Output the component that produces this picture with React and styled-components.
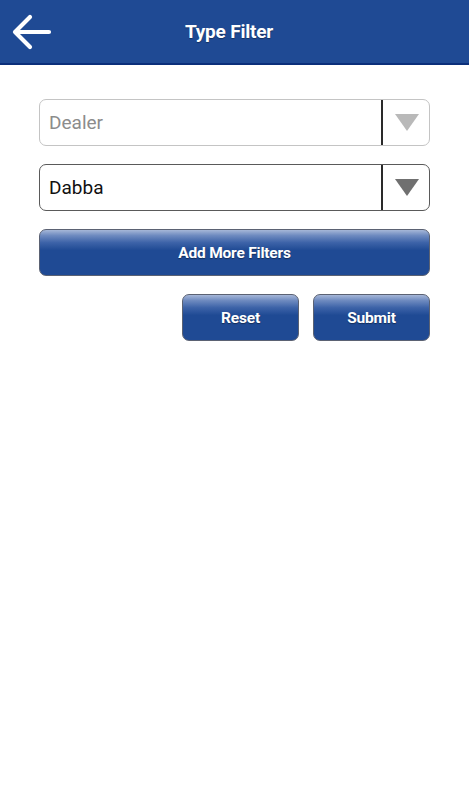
import React from "react";
import styled, { createGlobalStyle } from "styled-components";

const GlobalStyle = createGlobalStyle`
    html, body {
        margin: 0;
        padding: 0;
        background: #ffffff;
        font-family: Roboto, "Liberation Sans", sans-serif;
    }
`

const Page = styled.div`
    width: 469px;
    height: 800px;
    background: #ffffff;
`

const Header = styled.div`
    height: 63px;
    background-color: #1f4a94;
    border-bottom: 2px solid #0b2f7a;
    display: flex;
    align-items: center;
`

const BackButton = styled.div`
    width: 64px;
    height: 63px;
    display: flex;
    align-items: center;
    justify-content: center;
    padding-right: 1px;
    box-sizing: border-box;
`

const Title = styled.div`
    flex: 1;
    text-align: center;
    color: #ffffff;
    font-weight: 700;
    font-size: 19px;
    letter-spacing: -0.2px;
    margin-right: 75px;
    text-shadow: 0 1px 1px rgba(0, 0, 0, 0.35);
`

const Content = styled.div`
    padding: 34px 39px 0 39px;
    display: flex;
    flex-direction: column;
`

const Select = styled.div`
    height: 47px;
    box-sizing: border-box;
    border: 1px solid ${p => p.$muted ? "#c4c4c4" : "#5a5a5a"};
    border-radius: 7px;
    display: flex;
    align-items: stretch;
    margin-bottom: ${p => p.$gap}px;
`

const SelectText = styled.div`
    flex: 1;
    display: flex;
    align-items: center;
    padding-left: 9px;
    font-size: 19px;
    color: ${p => p.$muted ? "#8c8c8c" : "#111111"};
`

const Caret = styled.div`
    width: 44px;
    border-left: 2px solid #2a2a2a;
    display: flex;
    align-items: center;
    justify-content: center;
    padding-left: 2px;
`

const BlueButton = styled.div`
    height: 47px;
    box-sizing: border-box;
    border: 1px solid #5b6273;
    border-radius: 7px;
    background: linear-gradient(to bottom, #a6b7d8 0%, #6f8bc0 12%, #3d63a8 28%, #1f4a94 45%, #1f4a94 100%);
    color: #ffffff;
    font-weight: 700;
    font-size: 15.5px;
    letter-spacing: -0.2px;
    display: flex;
    align-items: center;
    justify-content: center;
    text-shadow: 0 1px 1px rgba(0, 0, 0, 0.4);
    width: ${p => p.$width ? p.$width + "px" : "auto"};
`

const ButtonRow = styled.div`
    margin-top: 18px;
    display: flex;
    justify-content: flex-end;
    gap: 14px;
`

const Triangle = ({ color }) =>
    <svg width="24" height="17" viewBox="0 0 24 17">
        <polygon points="0,0 24,0 12,17" fill={color}/>
    </svg>

const App = () =>
    <Page>
        <GlobalStyle/>
        <Header>
            <BackButton>
                <svg width="40" height="36" viewBox="0 0 40 36">
                    <path d="M3 18 H37 M18 3 L3 18 L18 33" stroke="#ffffff" strokeWidth="4.2"
                          fill="none" strokeLinecap="round" strokeLinejoin="round"/>
                </svg>
            </BackButton>
            <Title>Type Filter</Title>
        </Header>
        <Content>
            <Select $muted $gap={18}>
                <SelectText $muted>Dealer</SelectText>
                <Caret><Triangle color="#b9b9b9"/></Caret>
            </Select>
            <Select $gap={18}>
                <SelectText>Dabba</SelectText>
                <Caret><Triangle color="#707070"/></Caret>
            </Select>
            <BlueButton>Add More Filters</BlueButton>
            <ButtonRow>
                <BlueButton $width={117}>Reset</BlueButton>
                <BlueButton $width={117}>Submit</BlueButton>
            </ButtonRow>
        </Content>
    </Page>

export default App;
